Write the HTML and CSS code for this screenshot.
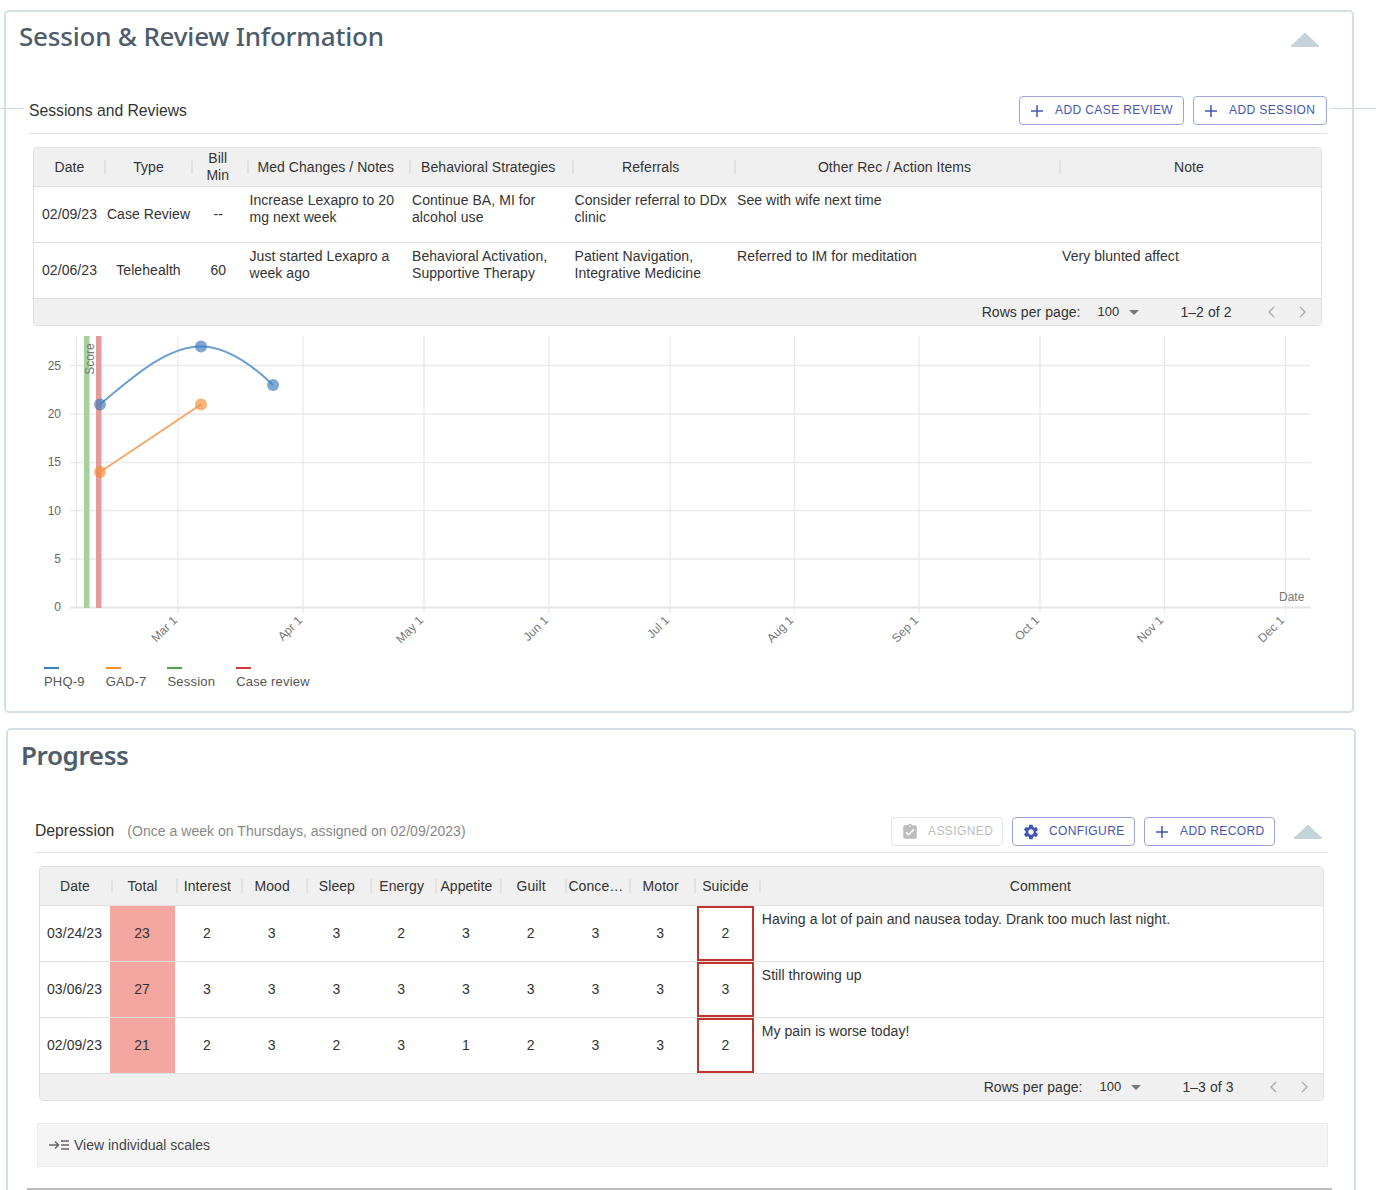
FILE: index.html
```html
<!DOCTYPE html>
<html>
	<head>
		<meta charset="UTF-8">
		<title>Session &amp; Review Information</title>
		<link rel="stylesheet" href="styles.css">
	</head>
	<body>
		<div class="edge-line edge-left"></div>
		<div class="edge-line edge-right"></div>

		<section class="card card-sessions">
			<div class="card-head">
				<h2 class="card-title">Session &amp; Review Information</h2>
				<svg class="collapse" viewBox="0 0 28 14"><path d="M14 1 L27 13 H1 Z" stroke-linejoin="round" stroke-width="2"/></svg>
			</div>
			<div class="sec-head">
				<div class="sec-name">Sessions and Reviews</div>
				<div class="sec-actions">
					<button class="btn btn-case"><svg class="ico-plus" viewBox="0 0 14 14"><path d="M7 1V13M1 7H13"/></svg>ADD CASE REVIEW</button>
					<button class="btn btn-session"><svg class="ico-plus" viewBox="0 0 14 14"><path d="M7 1V13M1 7H13"/></svg>ADD SESSION</button>
				</div>
			</div>

			<div class="grid-wrap">
				<table class="grid grid-sessions">
					<colgroup>
						<col class="c-date"><col class="c-type"><col class="c-bill"><col class="c-text"><col class="c-text"><col class="c-text"><col class="c-other"><col class="c-note">
					</colgroup>
					<thead>
						<tr>
							<th>Date</th><th>Type</th><th class="th-bill">Bill<br>Min</th><th class="th-text">Med Changes / Notes</th><th class="th-text">Behavioral Strategies</th><th class="th-text">Referrals</th><th class="th-text">Other Rec / Action Items</th><th class="no-sep th-note">Note</th>
						</tr>
					</thead>
					<tbody>
						<tr>
							<td class="mid">02/09/23</td><td class="mid">Case Review</td><td class="mid td-bill">--</td>
							<td>Increase Lexapro to 20 mg next week</td><td>Continue BA, MI for alcohol use</td><td>Consider referral to DDx clinic</td><td>See with wife next time</td><td></td>
						</tr>
						<tr>
							<td class="mid">02/06/23</td><td class="mid">Telehealth</td><td class="mid td-bill">60</td>
							<td>Just started Lexapro a week ago</td><td>Behavioral Activation, Supportive Therapy</td><td>Patient Navigation, Integrative Medicine</td><td>Referred to IM for meditation</td><td>Very blunted affect</td>
						</tr>
					</tbody>
				</table>
				<div class="pager">
					<span class="pg-label">Rows per page:</span>
					<span class="pg-size">100</span>
					<svg class="pg-caret" viewBox="0 0 10 5"><path d="M0 0H10L5 5Z"/></svg>
					<span class="pg-range">1–2 of 2</span>
					<svg class="pg-arrow" viewBox="0 0 8 12"><path d="M7 1L2 6L7 11"/></svg>
					<svg class="pg-arrow" viewBox="0 0 8 12"><path d="M1 1L6 6L1 11"/></svg>
				</div>
			</div>

			<svg class="chart" viewBox="30 336 1300 324" width="1300" height="324">
				<g class="grid-lines">
					<path d="M70 365.5H1311M70 414H1311M70 462.5H1311M70 510.5H1311M70 559H1311"/>
					<path d="M76.5 336V607M178 336V613M303 336V613M424 336V613M549 336V613M670 336V613M794.5 336V613M919 336V613M1040 336V613M1164.5 336V613M1285.5 336V613"/>
				</g>
				<path class="x-axis" d="M70 607.5H1311"/>
				<rect x="84" y="336" width="5.5" height="272" fill="#a6d19c"/>
				<rect x="96" y="336" width="5.5" height="272" fill="#e59b99"/>
				<path class="line line-blue" d="M100 404.5C134 376 167 346.5 201 346.5C225 346.5 249 362 273 385"/>
				<path class="line line-orange" d="M100 472L201 404.5"/>
				<g fill="#3a7ab8" fill-opacity=".65">
					<circle cx="100" cy="404.5" r="6"/><circle cx="201" cy="346.5" r="6"/><circle cx="273" cy="385" r="6"/>
				</g>
				<g fill="#f58a33" fill-opacity=".65">
					<circle cx="100" cy="472" r="6"/><circle cx="201" cy="404.5" r="6"/>
				</g>
				<g class="y-ticks">
					<text x="61" y="370">25</text><text x="61" y="418">20</text><text x="61" y="466">15</text><text x="61" y="514.5">10</text><text x="61" y="563">5</text><text x="61" y="611">0</text>
				</g>
				<g class="x-ticks">
					<text transform="rotate(-45 178 621)" x="178" y="621">Mar 1</text>
					<text transform="rotate(-45 303 621)" x="303" y="621">Apr 1</text>
					<text transform="rotate(-45 424 621)" x="424" y="621">May 1</text>
					<text transform="rotate(-45 549 621)" x="549" y="621">Jun 1</text>
					<text transform="rotate(-45 670 621)" x="670" y="621">Jul 1</text>
					<text transform="rotate(-45 794 621)" x="794" y="621">Aug 1</text>
					<text transform="rotate(-45 919 621)" x="919" y="621">Sep 1</text>
					<text transform="rotate(-45 1040 621)" x="1040" y="621">Oct 1</text>
					<text transform="rotate(-45 1164 621)" x="1164" y="621">Nov 1</text>
					<text transform="rotate(-45 1285 621)" x="1285" y="621">Dec 1</text>
				</g>
				<text class="axis-name" transform="rotate(-90 94 359)" x="94" y="359" text-anchor="middle">Score</text>
				<text class="axis-name" x="1279" y="601">Date</text>
			</svg>

			<div class="legend">
				<div class="leg-item"><i class="leg-blue"></i>PHQ-9</div>
				<div class="leg-item"><i class="leg-orange"></i>GAD-7</div>
				<div class="leg-item"><i class="leg-green"></i>Session</div>
				<div class="leg-item"><i class="leg-red"></i>Case review</div>
			</div>
		</section>

		<section class="card card-progress">
			<div class="card-head">
				<h2 class="card-title title-progress">Progress</h2>
			</div>
			<div class="sec-head">
				<div class="sec-name">Depression<span class="sec-note">(Once a week on Thursdays, assigned on 02/09/2023)</span></div>
				<div class="sec-actions">
					<button class="btn btn-off"><svg class="ico-fill" viewBox="0 0 24 24"><path d="M19 3h-4.18C14.4 1.84 13.3 1 12 1c-1.3 0-2.4.84-2.82 2H5c-1.1 0-2 .9-2 2v14c0 1.1.9 2 2 2h14c1.1 0 2-.9 2-2V5c0-1.1-.9-2-2-2zm-7 0c.55 0 1 .45 1 1s-.45 1-1 1-1-.45-1-1 .45-1 1-1zm-2 14l-4-4 1.41-1.41L10 14.17l6.59-6.59L18 9l-8 8z"/></svg>ASSIGNED</button>
					<button class="btn btn-config"><svg class="ico-fill" viewBox="0 0 24 24"><path d="M19.14 12.94c.04-.3.06-.61.06-.94 0-.32-.02-.64-.07-.94l2.03-1.58c.18-.14.23-.41.12-.61l-1.92-3.32c-.12-.22-.37-.29-.59-.22l-2.39.96c-.5-.38-1.03-.7-1.62-.94l-.36-2.54c-.04-.24-.24-.41-.48-.41h-3.84c-.24 0-.43.17-.47.41l-.36 2.54c-.59.24-1.13.57-1.62.94l-2.39-.96c-.22-.08-.47 0-.59.22L2.74 8.87c-.12.21-.08.47.12.61l2.03 1.58c-.05.3-.09.63-.09.94s.02.64.07.94l-2.03 1.58c-.18.14-.23.41-.12.61l1.92 3.32c.12.22.37.29.59.22l2.39-.96c.5.38 1.03.7 1.62.94l.36 2.54c.05.24.24.41.48.41h3.84c.24 0 .44-.17.47-.41l.36-2.54c.59-.24 1.13-.56 1.62-.94l2.39.96c.22.08.47 0 .59-.22l1.92-3.32c.12-.22.07-.47-.12-.61l-2.01-1.58zM12 15.6c-1.98 0-3.6-1.62-3.6-3.6s1.62-3.6 3.6-3.6 3.6 1.62 3.6 3.6-1.62 3.6-3.6 3.6z"/></svg>CONFIGURE</button>
					<button class="btn btn-record"><svg class="ico-plus" viewBox="0 0 14 14"><path d="M7 1V13M1 7H13"/></svg>ADD RECORD</button>
					<svg class="collapse collapse-sm" viewBox="0 0 28 14"><path d="M14 1 L27 13 H1 Z" stroke-linejoin="round" stroke-width="2"/></svg>
				</div>
			</div>

			<div class="grid-wrap">
				<table class="grid grid-scores">
					<colgroup>
						<col class="s-date"><col class="s-total"><col class="s-item"><col class="s-item"><col class="s-item"><col class="s-item"><col class="s-item"><col class="s-item"><col class="s-item"><col class="s-item"><col class="s-item"><col class="s-comment">
					</colgroup>
					<thead>
						<tr>
							<th>Date</th><th>Total</th><th>Interest</th><th>Mood</th><th>Sleep</th><th>Energy</th><th>Appetite</th><th>Guilt</th><th>Conce…</th><th>Motor</th><th>Suicide</th><th class="no-sep">Comment</th>
						</tr>
					</thead>
					<tbody>
						<tr>
							<td class="mid">03/24/23</td><td class="mid total">23</td><td class="mid">2</td><td class="mid">3</td><td class="mid">3</td><td class="mid">2</td><td class="mid">3</td><td class="mid">2</td><td class="mid">3</td><td class="mid">3</td>
							<td class="flag-cell"><div class="flag">2</div></td>
							<td class="comment">Having a lot of pain and nausea today. Drank too much last night.</td>
						</tr>
						<tr>
							<td class="mid">03/06/23</td><td class="mid total">27</td><td class="mid">3</td><td class="mid">3</td><td class="mid">3</td><td class="mid">3</td><td class="mid">3</td><td class="mid">3</td><td class="mid">3</td><td class="mid">3</td>
							<td class="flag-cell"><div class="flag">3</div></td>
							<td class="comment">Still throwing up</td>
						</tr>
						<tr>
							<td class="mid">02/09/23</td><td class="mid total">21</td><td class="mid">2</td><td class="mid">3</td><td class="mid">2</td><td class="mid">3</td><td class="mid">1</td><td class="mid">2</td><td class="mid">3</td><td class="mid">3</td>
							<td class="flag-cell"><div class="flag">2</div></td>
							<td class="comment">My pain is worse today!</td>
						</tr>
					</tbody>
				</table>
				<div class="pager">
					<span class="pg-label">Rows per page:</span>
					<span class="pg-size">100</span>
					<svg class="pg-caret" viewBox="0 0 10 5"><path d="M0 0H10L5 5Z"/></svg>
					<span class="pg-range">1–3 of 3</span>
					<svg class="pg-arrow" viewBox="0 0 8 12"><path d="M7 1L2 6L7 11"/></svg>
					<svg class="pg-arrow" viewBox="0 0 8 12"><path d="M1 1L6 6L1 11"/></svg>
				</div>
			</div>

			<div class="scales">
				<svg class="ico-scales" viewBox="0 0 20 10"><path d="M0 5H9M6 1.5L9.5 5L6 8.5M12 1H20M12 5H20M12 9H20"/></svg>
				View individual scales
			</div>
			<div class="next-rule"></div>
		</section>
	</body>
</html>
```

FILE: styles.css
```css
*{padding: 0;margin: 0;box-sizing: border-box;}
html,body{height: 1190px;overflow: hidden;background: #fff;}
body{position: relative;font-family: "Liberation Sans", Arial, sans-serif;font-size: 14px;color: #333;}

.edge-line{position: absolute;top: 108px;height: 1px;background: #cfdbe2;}
.edge-left{left: 0;width: 24px;}
.edge-right{left: 1331px;width: 45px;}

.card{width: 1350px;border: 2px solid #d3dee5;border-radius: 5px;background: #fff;}
.card-sessions{margin: 10px 0 0 4px;height: 703px;}
.card-progress{margin: 15px 0 0 6px;height: 462px;border-bottom: 0;border-radius: 5px 5px 0 0;}

.card-head{height: 84px;display: flex;justify-content: space-between;align-items: flex-start;padding: 8px 33px 0 13px;}
.card-progress .card-head{height: 87px;padding-top: 9px;}
.card-title{font-family: "Noto Sans", sans-serif;font-size: 26px;line-height: 32px;font-weight: 500;letter-spacing: -.2px;color: #4f5d6b;}
.title-progress{font-weight: 600;letter-spacing: -.4px;}
.collapse{width: 28px;height: 14px;margin-top: 13px;fill: #c5d3da;stroke: #c5d3da;}
.collapse-sm{margin: 0 6px 0 10px;}

.sec-head{display: flex;justify-content: space-between;align-items: center;height: 38px;padding-bottom: 8px;margin: 0 25px 0 23px;border-bottom: 1px solid #e4e4e4;}
.card-progress .sec-head{margin: 0 26px 0 27px;height: 36px;padding-bottom: 6px;}
.sec-name{font-size: 15.7px;color: #333;}
.card-progress .sec-name{margin-top: -2px;}
.sec-note{font-size: 14px;letter-spacing: .03px;color: #888;margin-left: 13px;}
.sec-actions{display: flex;align-items: center;gap: 9px;}

.btn{height: 29px;display: flex;align-items: center;padding-bottom: 2px;white-space: nowrap;background: #fff;border: 1px solid #9aa5dc;border-radius: 4px;color: #4456b4;font-family: "Liberation Sans", Arial, sans-serif;font-size: 12px;letter-spacing: .4px;}
.btn-case{width: 165px;padding-left: 10px;}
.btn-session{width: 134px;padding-left: 10px;}
.btn-off{width: 112px;padding-left: 9px;border-color: #e4e4e4;color: #bdbdbd;}
.btn-config{width: 123px;padding-left: 9px;}
.btn-record{width: 131px;padding-left: 10px;}
.ico-plus{width: 14px;height: 14px;margin: 2px 11px 0 0;fill: none;stroke: currentColor;stroke-width: 1.5;}
.ico-fill{width: 18px;height: 18px;margin: 2px 9px 0 0;fill: currentColor;}

.grid-wrap{margin: 13px 0 0 27px;width: 1289px;border: 1px solid #e0e0e0;border-radius: 4px;overflow: hidden;letter-spacing: .06px;}
.card-progress .grid-wrap{margin: 13px 0 0 31px;width: 1285px;}
.grid{width: 100%;table-layout: fixed;border-collapse: separate;border-spacing: 0;}
.grid th{position: relative;height: 39px;background: #f0f0f0;font-weight: normal;line-height: 17px;border-bottom: 1px solid #e0e0e0;text-align: center;}
.grid th::after{content: "";position: absolute;z-index: 1;top: 12px;right: -1px;width: 2px;height: 14px;background: #e2e2e2;}
.grid-scores th::after{right: -3px;}
.grid th.no-sep::after{display: none;}
.grid th.th-bill{padding-right: 4px;}
.grid th.th-text{padding-right: 6px;}
.grid th.th-note{padding-right: 3px;}
.grid td{height: 56px;line-height: 17px;padding: 5px 3px 0 2px;vertical-align: top;border-bottom: 1px solid #e0e0e0;}
.grid td.mid{padding: 0;text-align: center;vertical-align: middle;}
.grid td.td-bill{padding-right: 3px;}
.grid-scores td.mid{padding-right: 1px;}
.grid td.total{background: #f4a6a1;}
.grid td.comment{padding-left: 4px;}
.grid td.flag-cell{padding: 0 4px;vertical-align: top;}
.flag{height: 55px;display: flex;align-items: center;justify-content: center;border: 2px solid #c0352f;}

.c-date{width: 71px;}
.c-type{width: 87px;}
.c-bill{width: 55.5px;}
.c-text{width: 162.5px;}
.c-other{width: 325px;}
.c-note{width: 261px;}

.s-date{width: 70px;}
.s-total{width: 65px;}
.s-item{width: 64.75px;}
.s-comment{width: 565.25px;}

.pager{height: 26px;display: flex;align-items: center;justify-content: flex-end;background: #f0f0f0;color: #333;}
.pg-size{margin-left: 17px;font-size: 13px;margin-top: -2px;}
.pg-caret{width: 10px;height: 5px;margin-left: 10px;fill: #777;}
.pg-range{margin-left: 41px;}
.pg-arrow{width: 8px;height: 12px;margin-left: 24px;fill: none;stroke: #aaa;stroke-width: 1.3;}
.pg-range + .pg-arrow{margin-left: 35px;}
.pager .pg-arrow:last-child{margin-right: 14.5px;}

.chart{display: block;margin: 10px 0 0 24px;}
.grid-lines{fill: none;stroke: #eaeaea;stroke-width: 1.3;}
.x-axis{fill: none;stroke: #e6e6e6;stroke-width: 2;}
.line{fill: none;stroke-width: 2;}
.line-blue{stroke: #6a9fd0;}
.line-orange{stroke: #f5a868;}
.y-ticks text{font-size: 12px;fill: #666;text-anchor: end;}
.x-ticks text{font-size: 12px;fill: #777;text-anchor: end;}
.axis-name{font-size: 12px;fill: #777;}

.legend{display: flex;gap: 21px;padding: 7px 0 0 38px;}
.leg-item{font-size: 13px;letter-spacing: .2px;color: #555;line-height: 15px;}
.leg-item i{display: block;width: 15px;height: 2px;margin-bottom: 5px;}
.leg-blue{background: #3a7fc1;}
.leg-orange{background: #f28e2c;}
.leg-green{background: #55a14b;}
.leg-red{background: #cb3c3a;}

.scales{display: flex;align-items: center;height: 44px;margin: 22px 0 0 29px;width: 1291px;padding-left: 11px;background: #f5f5f5;border: 1px solid #ebebeb;color: #444;}
.ico-scales{width: 20px;height: 10px;margin-right: 5px;fill: none;stroke: #666;stroke-width: 1.5;}
.next-rule{height: 2px;margin: 21px 0 0 19px;width: 1305px;background: #bdbdbd;}
```
